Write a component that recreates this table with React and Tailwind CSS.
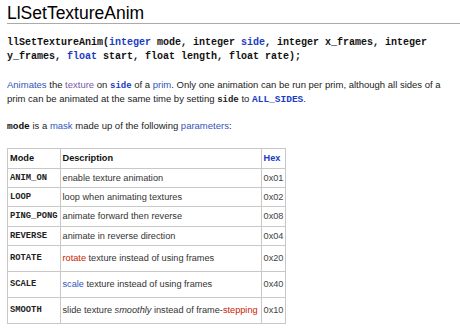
export default function App() {
  const mono = { fontFamily: '"Liberation Mono", "Courier New", monospace' };
  const rows = [
    ["ANIM_ON", <>enable texture animation</>, "0x01", "h-[19px]"],
    ["LOOP", <>loop when animating textures</>, "0x02", "h-[19px]"],
    ["PING_PONG", <>animate forward then reverse</>, "0x08", "h-[20px]"],
    ["REVERSE", <>animate in reverse direction</>, "0x04", "h-[19px]"],
    ["ROTATE", <><span className="text-[#cc2200]">rotate</span> texture instead of using frames</>, "0x20", "h-[26px]"],
    ["SCALE", <><span className="text-[#3355bb]">scale</span> texture instead of using frames</>, "0x40", "h-[26px]"],
    ["SMOOTH", <>slide texture <i>smoothly</i> instead of frame-<span className="text-[#cc2200]">stepping</span></>, "0x10", "h-[26px]"],
  ];
  return (
    <div
      className="w-[460px] h-[330px] bg-white overflow-hidden text-[#222]"
      style={{ fontFamily: '"Liberation Sans", Arial, sans-serif' }}
    >
      <div className="pl-[7px]">
        <h1 className="text-[17.5px] leading-[20px] pt-[3px] border-b border-[#aaaaaa] text-black">
          LlSetTextureAnim
        </h1>
        <div className="mt-[12px] text-[10px] leading-[14px] font-bold text-[#111]" style={mono}>
          <div>
            llSetTextureAnim(<span className="text-[#1a3cc2]">integer</span> mode, integer{" "}
            <span className="text-[#1a3cc2]">side</span>, integer x_frames, integer
          </div>
          <div>
            y_frames, <span className="text-[#1a3cc2]">float</span> start, float length, float rate);
          </div>
        </div>
        <p className="mt-[14px] text-[9.5px] leading-[13.5px] pr-[8px]">
          <span className="text-[#3355bb]">Animates</span> the{" "}
          <span className="text-[#7a58a8]">texture</span> on{" "}
          <b className="text-[#1a3cc2] text-[9px] leading-none" style={mono}>side</b> of a{" "}
          <span className="text-[#3355bb]">prim</span>. Only one animation can be run per prim, although all sides of a
          prim can be animated at the same time by setting{" "}
          <b className="text-[9px] leading-none" style={mono}>side</b> to{" "}
          <b className="text-[#1a3cc2] text-[9.5px] leading-none" style={mono}>ALL_SIDES</b>.
        </p>
        <p className="mt-[14px] text-[9.5px] leading-[13.5px]">
          <b className="text-[9.5px] text-[#111] leading-none" style={mono}>mode</b> is a{" "}
          <span className="text-[#3355bb]">mask</span> made up of the following{" "}
          <span className="text-[#3355bb]">parameters</span>:
        </p>
        <table className="mt-[15px] border-collapse text-[9.2px] leading-[12px]">
          <thead>
            <tr className="h-[20px]">
              <th className="w-[52px] border border-[#c8c8c8] text-left font-bold px-[2px] text-[#111]">Mode</th>
              <th className="w-[201px] border border-[#c8c8c8] text-left font-bold px-[2px] text-[#111]">Description</th>
              <th className="w-[24px] border border-[#c8c8c8] text-left font-bold px-[2px] text-[#1a3cc2]">Hex</th>
            </tr>
          </thead>
          <tbody>
            {rows.map(([m, d, h, ht]) => (
              <tr key={m} className={ht}>
                <td className="border border-[#c8c8c8] px-[2px] font-bold text-[8.8px] text-[#222]" style={mono}>{m}</td>
                <td className="border border-[#c8c8c8] px-[2px] text-[#333] whitespace-nowrap">{d}</td>
                <td className="border border-[#c8c8c8] px-[2px] text-[#444]">{h}</td>
              </tr>
            ))}
          </tbody>
        </table>
      </div>
    </div>
  );
}
